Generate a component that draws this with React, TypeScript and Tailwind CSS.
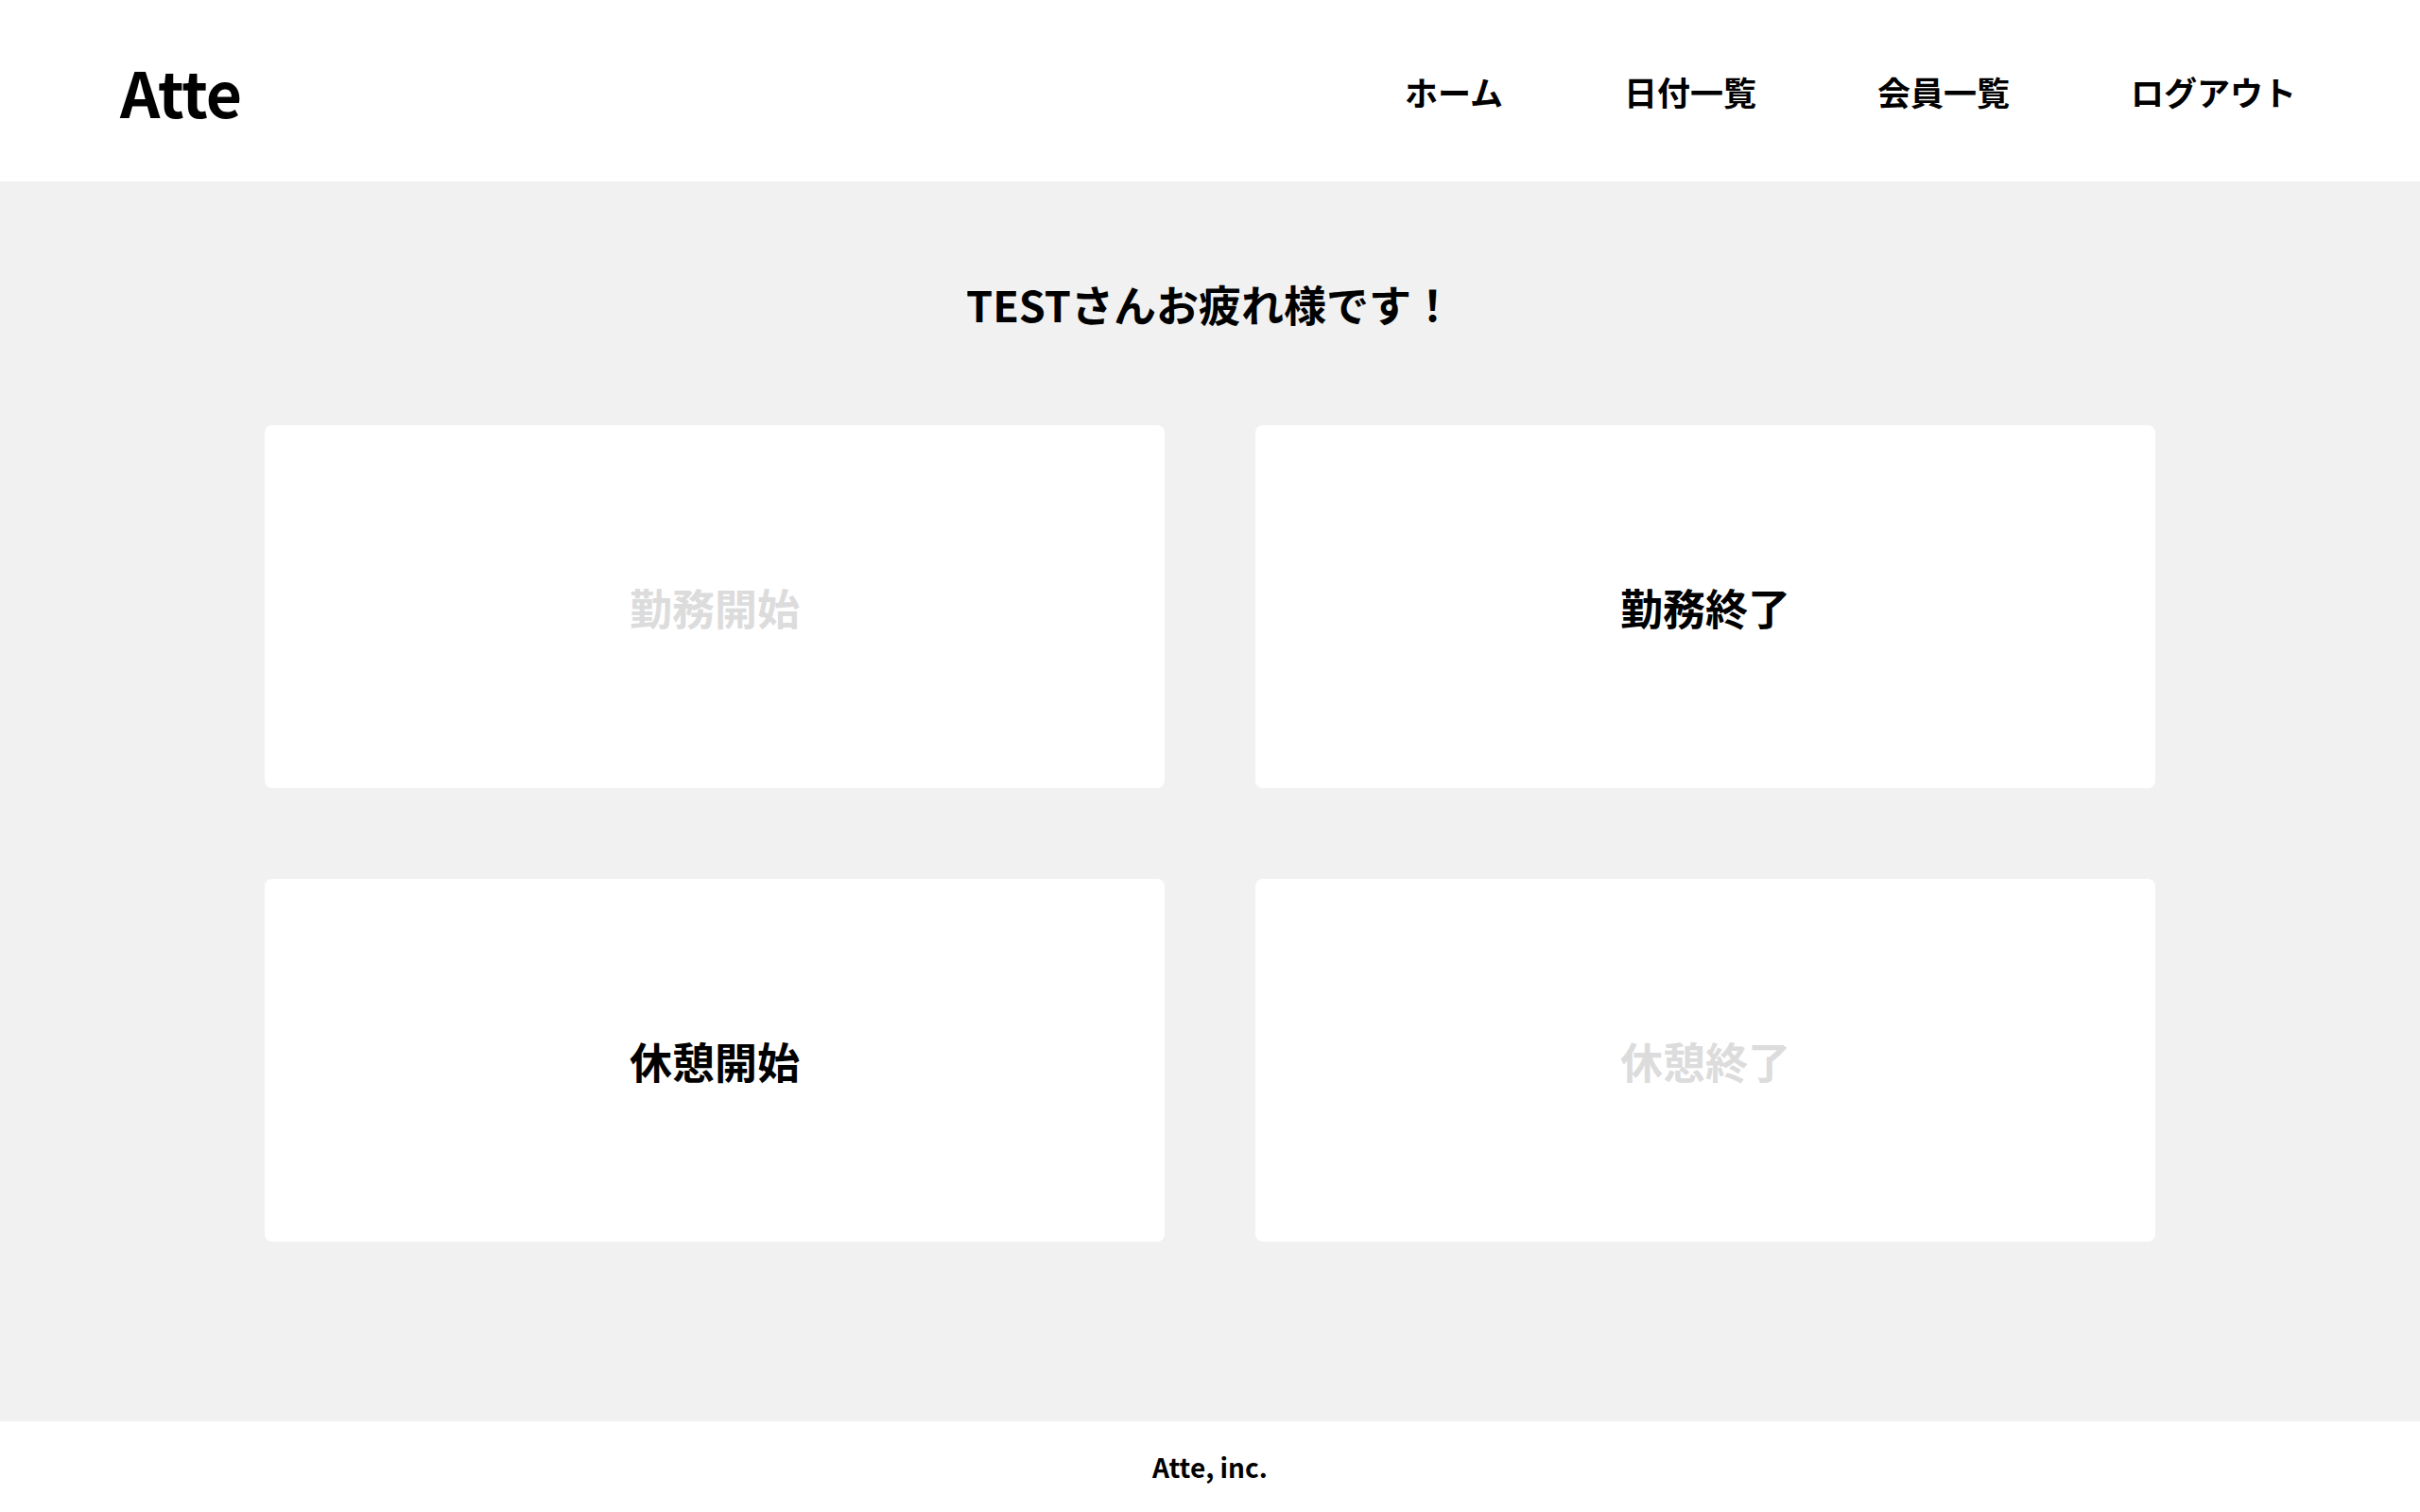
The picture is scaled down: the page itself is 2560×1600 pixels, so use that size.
import React from "react";

const font = { fontFamily: '"Noto Sans CJK JP", "Noto Sans", sans-serif' };

function Card({ label, disabled }: { label: string; disabled?: boolean }) {
  return (
    <div className="h-[384px] bg-white rounded-[8px] flex items-center justify-center">
      <span
        className={
          "text-[45px] font-bold leading-none " +
          (disabled ? "text-[#dcdcdc]" : "text-black")
        }
      >
        {label}
      </span>
    </div>
  );
}

export default function App() {
  return (
    <div className="w-[2560px] h-[1600px] flex flex-col bg-white text-black" style={font}>
      <header className="h-[192px] shrink-0 bg-white flex items-center justify-between pl-[127px] pr-[131px]">
        <div className="text-[66px] font-bold leading-none tracking-[-1px]">Atte</div>
        <nav className="flex items-center gap-[128px] text-[35px] font-bold leading-none">
          <a>ホーム</a>
          <a>日付一覧</a>
          <a>会員一覧</a>
          <a>ログアウト</a>
        </nav>
      </header>
      <main className="flex-1 bg-[#f1f1f1] flex flex-col items-center pt-[81px]">
        <div className="h-[96px] flex items-center justify-center text-[45px] font-bold leading-none">
          TESTさんお疲れ様です！
        </div>
        <div className="mt-[81px] w-[2000px] grid grid-cols-2 gap-[96px]">
          <Card label="勤務開始" disabled />
          <Card label="勤務終了" />
          <Card label="休憩開始" />
          <Card label="休憩終了" disabled />
        </div>
      </main>
      <footer className="h-[96px] shrink-0 bg-white flex items-center justify-center text-[28px] font-bold leading-none">
        Atte, inc.
      </footer>
    </div>
  );
}
